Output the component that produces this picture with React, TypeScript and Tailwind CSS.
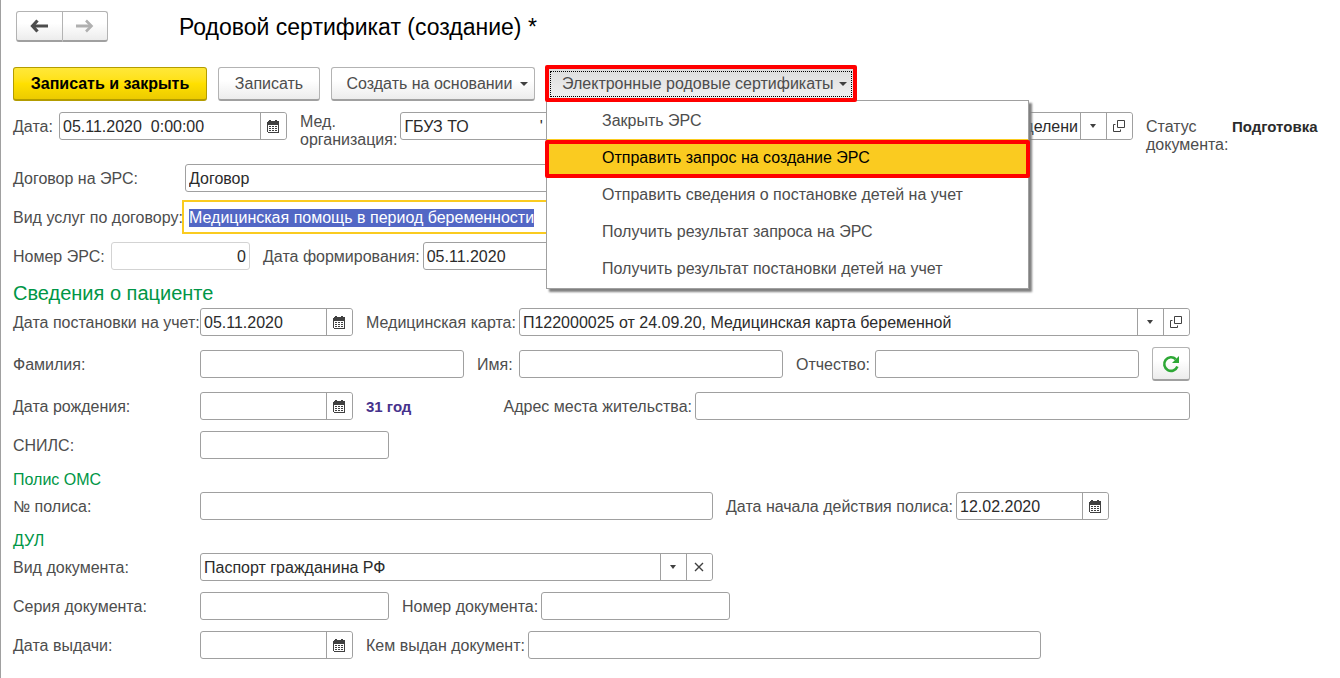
import { useEffect, useRef, type ReactNode } from "react";
import { clsx } from "clsx";

const inputClass = "h-full min-w-0 flex-1 bg-transparent px-[3px] pt-0.5 text-[#2b2b2b] outline-none";
const cellClass = "flex h-full w-[26px] shrink-0 items-center justify-center border-l border-[#a0a0a0] bg-white pr-px text-[#404040]";
const buttonClass =
  "flex items-center justify-center rounded-[3px] border border-[#b3b3b3] border-b-2 border-b-[#a0a0a0] bg-linear-to-b from-white from-40% to-[#ececec]";

function CalendarIcon() {
  return (
    <svg width="12" height="14" viewBox="0 -1 12 14" fill="currentColor" shapeRendering="crispEdges" aria-hidden="true">
      <path fillRule="evenodd" d="M2 0h2v1h4V0h2v1h1l1 1v10l-1 1H1l-1-1V2l1-1h1zM1 5v7h10V5z" />
      <path d="M2 6h2v1H2zm3 0h2v1H5zm3 0h2v1H8zM2 8h2v1H2zm3 0h2v1H5zm3 0h2v1H8zM2 10h2v1H2zm3 0h2v1H5zm3 0h2v1H8z" />
    </svg>
  );
}

function OpenIcon() {
  return (
    <svg width="12" height="12" viewBox="0 0 12 12" fill="none" stroke="currentColor" aria-hidden="true">
      <path d="M4.5 .5h7v7h-7zM2.5 4.5h-2v7h7v-2" />
    </svg>
  );
}

function CaretIcon({ small }: { small?: boolean }) {
  return (
    <svg width={small ? 6 : 8} height="4" viewBox="0 0 8 4" preserveAspectRatio="none" fill="#404040" aria-hidden="true">
      <path d="M0 0h8L4 4z" />
    </svg>
  );
}

function ArrowIcon({ forward }: { forward?: boolean }) {
  return (
    <svg width="18" height="14" viewBox="0 0 18 14" fill="none" stroke={forward ? "#b0b0b0" : "#4d4d4d"} aria-hidden="true">
      {forward ? (
        <>
          <path strokeWidth="3" d="M0 7h14" />
          <path strokeWidth="2.6" d="M10 1.5L15.5 7 10 12.5" />
        </>
      ) : (
        <>
          <path strokeWidth="3" d="M3 7h15" />
          <path strokeWidth="3.2" d="M7.5 1.5L2.5 7l5 5.5" />
        </>
      )}
    </svg>
  );
}

function RefreshIcon() {
  return (
    <svg width="18" height="18" viewBox="0 0 18 18" aria-hidden="true">
      <path d="M13.8 4.2A6.8 6.8 0 1 0 15.4 11.5" fill="none" stroke="#2ea836" strokeWidth="2.6" />
      <path d="M17 1v7h-7z" fill="#2ea836" />
    </svg>
  );
}

function Box({ className, children }: { className?: string; children: ReactNode }) {
  return (
    <div className={clsx("flex h-7 rounded-[3px] border bg-white", className)}>{children}</div>
  );
}

function Label({ id, className, children }: { id: string; className?: string; children: ReactNode }) {
  return (
    <label htmlFor={id} className={clsx("shrink-0 pt-0.5 whitespace-nowrap", className)}>
      {children}
    </label>
  );
}

function TextField({
  id,
  value,
  className,
  align,
  readOnly,
}: {
  id: string;
  value?: string;
  className?: string;
  align?: string;
  readOnly?: boolean;
}) {
  return (
    <Box className={clsx(readOnly ? "border-[#d3d3d3]" : "border-[#a0a0a0]", className)}>
      <input id={id} defaultValue={value} readOnly={readOnly} className={clsx(inputClass, align)} />
    </Box>
  );
}

function DateField({ id, value, className = "w-[153px]" }: { id: string; value?: string; className?: string }) {
  return (
    <Box className={clsx("shrink-0 border-[#a0a0a0]", className)}>
      <input id={id} defaultValue={value} className={inputClass} />
      <button type="button" aria-label="Выбрать дату" className={clsx(cellClass, "rounded-r-[3px]")}>
        <CalendarIcon />
      </button>
    </Box>
  );
}

// The caret cell only decorates the select, clicks go through to it
function SelectField({
  id,
  value,
  label,
  className,
  align,
  action,
}: {
  id: string;
  value: string;
  label?: string;
  className?: string;
  align?: string;
  action: "open" | "clear";
}) {
  return (
    <Box className={clsx("border-[#a0a0a0]", className)}>
      <div className="relative min-w-0 flex-1">
        <select
          id={id}
          aria-label={label}
          className={clsx("h-full w-full appearance-none bg-transparent pt-0.5 pr-7 pl-[3px] text-[#2b2b2b] outline-none", align)}
        >
          <option>{value}</option>
        </select>
        <span className={clsx(cellClass, "pointer-events-none absolute top-0 right-0")}>
          <CaretIcon small />
        </span>
      </div>
      <button type="button" aria-label={action === "open" ? "Открыть" : "Очистить"} className={clsx(cellClass, "rounded-r-[3px]")}>
        {action === "open" ? (
          <OpenIcon />
        ) : (
          <svg width="10" height="10" viewBox="0 0 10 10" stroke="currentColor" strokeWidth="1.4" aria-hidden="true">
            <path d="M1 1l8 8m0-8l-8 8" />
          </svg>
        )}
      </button>
    </Box>
  );
}

function Pair({ className, children }: { className?: string; children: ReactNode }) {
  return <div className={clsx("flex items-center gap-[3px]", className)}>{children}</div>;
}

const menuItems = [
  "Закрыть ЭРС",
  "Отправить запрос на создание ЭРС",
  "Отправить сведения о постановке детей на учет",
  "Получить результат запроса на ЭРС",
  "Получить результат постановки детей на учет",
];

function CertificatesMenu() {
  return (
    <div className="relative z-10">
      <button
        type="button"
        aria-haspopup="menu"
        aria-expanded="true"
        className="flex h-[34px] w-[310px] items-center justify-between bg-linear-to-b from-[#dcdcdc] to-[#f2f2f2] pr-[9px] pl-4"
      >
        Электронные родовые сертификаты
        <CaretIcon />
      </button>
      <span className="pointer-events-none absolute inset-1 border border-dotted border-black" />
      <div
        role="menu"
        className="absolute top-[33px] left-0 w-[483px] border border-[#a0a0a0] bg-white py-px shadow-[3px_3px_2px_0_#808080]"
      >
        {menuItems.map((item, i) => (
          <button
            key={item}
            type="button"
            role="menuitem"
            className={clsx("relative flex h-[37px] w-full items-center pl-[55px]", i === 1 && "bg-[#facb20] text-black")}
          >
            {item}
            {i === 1 && <span className="pointer-events-none absolute -inset-x-0.5 top-px -bottom-0.5 rounded-xs border-4 border-[#ff0000]" />}
          </button>
        ))}
      </div>
      <span className="pointer-events-none absolute -inset-x-px -top-0.5 -bottom-px rounded-xs border-4 border-[#ff0000]" />
    </div>
  );
}

export default function App() {
  const serviceRef = useRef<HTMLInputElement>(null);

  useEffect(() => {
    serviceRef.current?.focus();
    serviceRef.current?.select();
  }, []);

  return (
    <main className="min-h-screen overflow-x-hidden border-l border-[#a0a0a0] bg-white pt-[11px] pr-3 pl-3 font-['Liberation_Sans',Arial,sans-serif] text-base leading-[18px] text-[#4d4d4d]">
      <header className="flex items-center">
        <div className="ml-[3px] flex h-[31px] w-[92px]">
          <button type="button" aria-label="Назад" className={clsx(buttonClass, "flex-1 rounded-r-none")}>
            <ArrowIcon />
          </button>
          <button type="button" aria-label="Вперед" className={clsx(buttonClass, "flex-1 rounded-l-none border-l-0")}>
            <ArrowIcon forward />
          </button>
        </div>
        <h1 className="ml-[71px] text-[23px] leading-7 text-black">Родовой сертификат (создание) *</h1>
      </header>

      <div className="mt-[25px] flex gap-[11px]">
        <button
          type="button"
          className="h-[34px] w-[194px] rounded-[3px] border border-b-2 border-[#b39c00] bg-linear-to-b from-[#ffe838] via-[#ffe000] to-[#eccb00] font-bold text-black"
        >
          Записать и закрыть
        </button>
        <button type="button" className={clsx(buttonClass, "h-[34px] w-[102px]")}>
          Записать
        </button>
        <button type="button" className={clsx(buttonClass, "h-[34px] w-[204px] gap-[7px] pl-2")}>
          Создать на основании
          <CaretIcon />
        </button>
        <CertificatesMenu />
      </div>

      <form>
        <div className="mt-[11px] flex h-[38px] items-start gap-[13px]">
          <Pair>
            <Label id="date" className="w-[43px]">
              Дата:
            </Label>
            <DateField id="date" value="05.11.2020  0:00:00" className="w-[228px]" />
          </Pair>
          <div className="flex flex-1 gap-[3px]">
            <label htmlFor="org" className="shrink-0 pt-px">
              Мед.
              <br />
              организация:
            </label>
            <TextField id="org" value={"ГБУЗ ТО" + " ".repeat(16) + "'"} className="w-[240px]" />
            <SelectField
              id="department"
              label="Отделение"
              value="Отделени"
              align="text-right"
              className="ml-2 flex-1"
              action="open"
            />
          </div>
          <div className="flex w-[182px] pt-1.5">
            <span className="w-[86px] shrink-0">Статус документа:</span>
            <b className="text-[15px] text-[#2b2b2b]">Подготовка</b>
          </div>
        </div>

        <div className="mt-3.5 flex items-center">
          <Label id="contract" className="w-[172px]">
            Договор на ЭРС:
          </Label>
          <TextField id="contract" value="Договор" className="w-[530px]" />
        </div>
        <div className="mt-[11px] flex items-center">
          <Label id="service" className="w-[172px]">
            Вид услуг по договору:
          </Label>
          <div className="flex h-7 w-[530px] border border-transparent outline-2 outline-offset-1 outline-[#facb20]">
            <input
              id="service"
              ref={serviceRef}
              defaultValue="Медицинская помощь в период беременности"
              className={clsx(inputClass, "selection:bg-[#5267c5] selection:text-white")}
            />
          </div>
        </div>
        <div className="mt-[11px] flex items-center gap-[13px]">
          <Pair>
            <Label id="ers-number" className="w-[95px]">
              Номер ЭРС:
            </Label>
            <TextField id="ers-number" value="0" align="text-right" readOnly className="w-[139px]" />
          </Pair>
          <Pair>
            <Label id="formed">Дата формирования:</Label>
            <DateField id="formed" value="05.11.2020" />
          </Pair>
        </div>

        <section className="max-w-[1177px]">
          <h2 className="mt-2.5 mb-0.5 text-xl leading-[26px] text-[#009646]">Сведения о пациенте</h2>
          <div className="flex items-center gap-[13px]">
            <div className="flex items-center">
              <Label id="registered" className="w-[187px]">
                Дата постановки на учет:
              </Label>
              <DateField id="registered" value="05.11.2020" />
            </div>
            <Pair className="flex-1">
              <Label id="card">Медицинская карта:</Label>
              <SelectField id="card" value="П122000025 от 24.09.20, Медицинская карта беременной" className="flex-1" action="open" />
            </Pair>
          </div>
          <div className="mt-[11px] flex items-center gap-[13px]">
            <div className="flex flex-1 items-center">
              <Label id="surname" className="w-[187px]">
                Фамилия:
              </Label>
              <TextField id="surname" className="flex-1" />
            </div>
            <Pair>
              <Label id="name" className="w-[39px]">
                Имя:
              </Label>
              <TextField id="name" className="w-[264px]" />
            </Pair>
            <Pair>
              <Label id="patronymic" className="w-[76px]">
                Отчество:
              </Label>
              <TextField id="patronymic" className="w-[264px]" />
            </Pair>
            <button type="button" aria-label="Обновить" className={clsx(buttonClass, "h-[34px] w-[38px]")}>
              <RefreshIcon />
            </button>
          </div>
          <div className="mt-[11px] flex items-center gap-[13px]">
            <div className="flex items-center">
              <Label id="birth" className="w-[187px]">
                Дата рождения:
              </Label>
              <DateField id="birth" />
            </div>
            <b className="pt-0.5 text-[15px] text-[#46328c]">31 год</b>
            <Pair className="ml-auto">
              <Label id="address">Адрес места жительства:</Label>
              <TextField id="address" className="w-[495px]" />
            </Pair>
          </div>
          <div className="mt-[11px] flex items-center">
            <Label id="snils" className="w-[187px]">
              СНИЛС:
            </Label>
            <TextField id="snils" className="w-[189px]" />
          </div>
        </section>

        <section>
          <h3 className="mt-3 mb-[3px] text-[#009646]">Полис ОМС</h3>
          <div className="flex items-center gap-[13px]">
            <div className="flex items-center">
              <Label id="policy" className="w-[187px]">
                № полиса:
              </Label>
              <TextField id="policy" className="w-[513px]" />
            </div>
            <Pair>
              <Label id="policy-start">Дата начала действия полиса:</Label>
              <DateField id="policy-start" value="12.02.2020" />
            </Pair>
          </div>
        </section>

        <section className="pb-4">
          <h3 className="mt-3 mb-[3px] text-[#009646]">ДУЛ</h3>
          <div className="flex items-center">
            <Label id="doc-type" className="w-[187px]">
              Вид документа:
            </Label>
            <SelectField id="doc-type" value="Паспорт гражданина РФ" className="w-[513px]" action="clear" />
          </div>
          <div className="mt-[11px] flex items-center gap-[13px]">
            <div className="flex items-center">
              <Label id="doc-series" className="w-[187px]">
                Серия документа:
              </Label>
              <TextField id="doc-series" className="w-[189px]" />
            </div>
            <Pair>
              <Label id="doc-number">Номер документа:</Label>
              <TextField id="doc-number" className="w-[189px]" />
            </Pair>
          </div>
          <div className="mt-[11px] flex items-center gap-[13px]">
            <div className="flex items-center">
              <Label id="issued" className="w-[187px]">
                Дата выдачи:
              </Label>
              <DateField id="issued" />
            </div>
            <Pair>
              <Label id="issuer">Кем выдан документ:</Label>
              <TextField id="issuer" className="w-[513px]" />
            </Pair>
          </div>
        </section>
      </form>
    </main>
  );
}
